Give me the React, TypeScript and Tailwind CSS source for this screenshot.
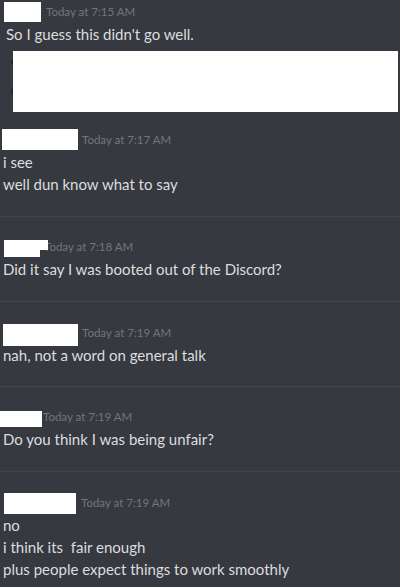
const Timestamp = ({ children, className = "" }: { children: string; className?: string }) => (
  <span className={`text-[11.5px] leading-[22px] text-[#72767d] whitespace-nowrap ${className}`}>{children}</span>
);

const Line = ({ children, className = "pl-[3px]" }: { children: string; className?: string }) => (
  <div className={`text-[15px] leading-[22px] text-[#dcddde] whitespace-pre ${className}`}>{children}</div>
);

const Divider = () => <div className="h-px bg-[#42454b]" />;

const App = () => {
  return (
    <div className="w-[400px] h-[587px] overflow-hidden bg-[#36393f] font-['Lato',sans-serif]">
      {/* first group */}
      <div className="pt-px">
        <div className="h-[22px] flex items-start">
          <div className="ml-[4px] mt-px w-[37px] h-[20px] bg-white" />
          <Timestamp className="ml-[5px]">Today at 7:15 AM</Timestamp>
        </div>
        <Line className="pl-[6px]">So I guess this didn't go well.</Line>
        <div className="mt-[6px] flex">
          <div className="ml-[11px] w-[2px] flex flex-col">
            <div className="mt-[9px] h-[4px] bg-[#2a2422]" />
            <div className="mt-[25px] h-[5px] bg-[#1f2a3a]" />
          </div>
          <div className="w-[385px] h-[61px] bg-white" />
        </div>
      </div>

      {/* second */}
      <div className="pt-[17px] pb-[21px]">
        <div className="h-[22px] flex items-start">
          <div className="ml-[2px] w-[76px] h-[21px] bg-white" />
          <Timestamp className="ml-[4px]">Today at 7:17 AM</Timestamp>
        </div>
        <Line>i see</Line>
        <Line>well dun know what to say</Line>
      </div>
      <Divider />

      {/* third, redaction covers the timestamp */}
      <div className="pt-[19px] pb-[21px]">
        <div className="h-[22px] flex items-start">
          <div className="relative z-10 ml-[4px] mt-[4px] w-[44px] h-[10px] bg-white">
            <div className="w-[36px] h-[17px] bg-white" />
          </div>
          <Timestamp className="-ml-[4px]">Today at 7:18 AM</Timestamp>
        </div>
        <Line>Did it say I was booted out of the Discord?</Line>
      </div>
      <Divider />

      <div className="pt-[20px] pb-[20px]">
        <div className="h-[22px] flex items-start">
          <div className="ml-[3px] mt-[2px] w-[75px] h-[22px] bg-white" />
          <Timestamp className="ml-[4px]">Today at 7:19 AM</Timestamp>
        </div>
        <Line>nah, not a word on general talk</Line>
      </div>
      <Divider />

      <div className="pt-[19px] pb-[21px]">
        <div className="h-[22px] flex items-start">
          <div className="mt-[5px] w-[42px] h-[16px] bg-white" />
          <Timestamp className="ml-px">Today at 7:19 AM</Timestamp>
        </div>
        <Line>Do you think I was being unfair?</Line>
      </div>
      <Divider />

      <div className="pt-[20px]">
        <div className="h-[22px] flex items-start">
          <div className="ml-[4px] mt-px w-[72px] h-[21px] bg-white" />
          <Timestamp className="ml-[5px]">Today at 7:19 AM</Timestamp>
        </div>
        <Line>no</Line>
        <Line>i think its  fair enough</Line>
        <Line>plus people expect things to work smoothly</Line>
      </div>
    </div>
  );
};

export default App;
